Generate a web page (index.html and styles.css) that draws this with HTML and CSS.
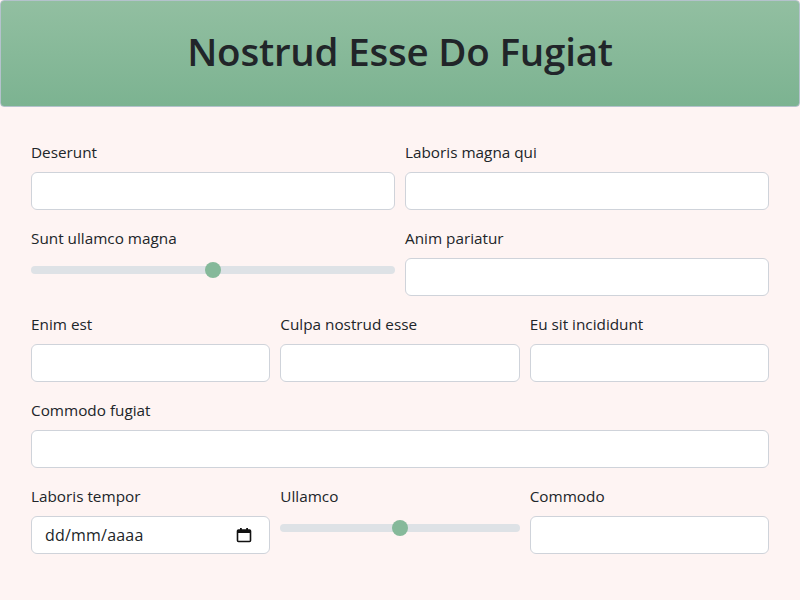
FILE: index.html
```html
<!DOCTYPE html>
<html lang="es">
<head>
<meta charset="utf-8">
<title>Nostrud Esse Do Fugiat</title>
<link rel="stylesheet" href="styles.css">
</head>
<body>
<header class="banner">
  <h1 class="banner-title">Nostrud Esse Do Fugiat</h1>
</header>
<form class="form">
  <div class="row cols-2">
    <div class="field">
      <label class="label" for="f1">Deserunt</label>
      <input class="input" id="f1" type="text">
    </div>
    <div class="field">
      <label class="label" for="f2">Laboris magna qui</label>
      <input class="input" id="f2" type="text">
    </div>
  </div>
  <div class="row cols-2">
    <div class="field">
      <label class="label" for="f3">Sunt ullamco magna</label>
      <input class="range" id="f3" type="range" min="0" max="100" value="50">
    </div>
    <div class="field">
      <label class="label" for="f4">Anim pariatur</label>
      <input class="input" id="f4" type="text">
    </div>
  </div>
  <div class="row cols-3">
    <div class="field">
      <label class="label" for="f5">Enim est</label>
      <input class="input" id="f5" type="text">
    </div>
    <div class="field">
      <label class="label" for="f6">Culpa nostrud esse</label>
      <input class="input" id="f6" type="text">
    </div>
    <div class="field">
      <label class="label" for="f7">Eu sit incididunt</label>
      <input class="input" id="f7" type="text">
    </div>
  </div>
  <div class="row cols-1">
    <div class="field">
      <label class="label" for="f8">Commodo fugiat</label>
      <input class="input" id="f8" type="text">
    </div>
  </div>
  <div class="row cols-3">
    <div class="field">
      <label class="label" for="f9">Laboris tempor</label>
      <div class="input date" id="f9">
        <span class="date-text">dd/mm/aaaa</span>
        <svg class="date-icon" width="16" height="16" viewBox="0 0 16 16" aria-hidden="true">
          <rect x="1.5" y="3" width="13" height="11.5" rx="1" fill="none" stroke="#111" stroke-width="1.6"/>
          <rect x="1.5" y="3" width="13" height="3" fill="#111"/>
          <rect x="4" y="1" width="1.8" height="3" fill="#111"/>
          <rect x="10.2" y="1" width="1.8" height="3" fill="#111"/>
        </svg>
      </div>
    </div>
    <div class="field">
      <label class="label" for="f10">Ullamco</label>
      <input class="range" id="f10" type="range" min="0" max="100" value="50">
    </div>
    <div class="field">
      <label class="label" for="f11">Commodo</label>
      <input class="input" id="f11" type="text">
    </div>
  </div>
</form>
</body>
</html>
```
FILE: styles.css
```css
* { box-sizing: border-box; }
html, body {
  margin: 0;
  padding: 0;
  background: #fef4f3;
  font-family: "Open Sans", "Noto Sans", sans-serif;
  color: #212529;
}
.banner {
  border: 1px solid #b4c2cc;
  border-radius: 4px;
  background: linear-gradient(to bottom, #92bfa1, #7cb391);
  padding: 26px 0 31px;
  text-align: center;
}
.banner-title {
  margin: 0;
  font-size: 38.5px;
  line-height: 48px;
  font-weight: 600;
  color: #212529;
  letter-spacing: -0.2px;
}
.form {
  padding: 33px 31px 0;
  display: flex;
  flex-direction: column;
  gap: 16px;
}
.row {
  display: grid;
  gap: 10px;
}
.cols-1 { grid-template-columns: 1fr; }
.cols-2 { grid-template-columns: 1fr 1fr; }
.cols-3 { grid-template-columns: 1fr 1fr 1fr; }
.field {
  display: flex;
  flex-direction: column;
  min-width: 0;
}
.label {
  font-size: 15.3px;
  line-height: 24px;
  margin-bottom: 8px;
}
.input {
  display: block;
  width: 100%;
  height: 38px;
  border: 1px solid #cfd3da;
  border-radius: 6px;
  background: #fff;
  font: inherit;
  font-size: 16px;
  padding: 0 12px;
  margin: 0;
}
.date {
  display: flex;
  align-items: center;
  justify-content: space-between;
  padding: 0 17px 0 13px;
}
.date-text {
  font-size: 16px;
  letter-spacing: 0.2px;
  color: #212529;
}
.date-icon { display: block; }
.range {
  -webkit-appearance: none;
  appearance: none;
  width: 100%;
  height: 24px;
  margin: 0;
  padding: 0;
  background: transparent;
}
.range::-webkit-slider-runnable-track {
  height: 8px;
  background: #dee2e6;
  border-radius: 4px;
}
.range::-webkit-slider-thumb {
  -webkit-appearance: none;
  appearance: none;
  width: 16px;
  height: 16px;
  border-radius: 50%;
  background: #86b99a;
  border: 0;
  margin-top: -4px;
}
```
